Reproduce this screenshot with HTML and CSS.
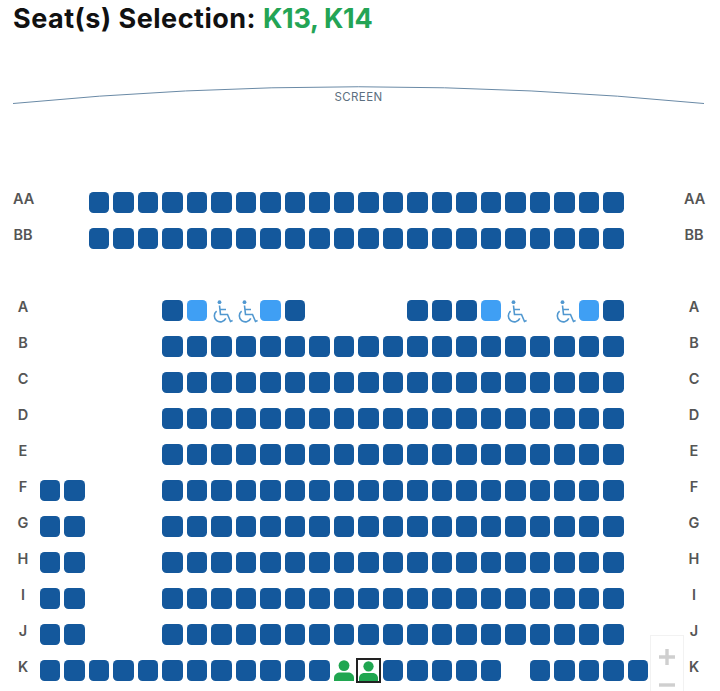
FILE: index.html
```html
<!DOCTYPE html>
<html lang="en">
<head>
<meta charset="utf-8">
<title>Seat Selection</title>
<link rel="stylesheet" href="styles.css">
</head>
<body>
<svg width="0" height="0" class="defs">
  <symbol id="wheel" viewBox="0 0 22 24">
    <circle cx="8.5" cy="3.2" r="1.9" fill="currentColor" stroke="none"/>
    <path d="M8.5 6.5 9.5 15.5H16.5L19.5 22.5 21.6 21.6M9 10.5H15" fill="none" stroke="currentColor" stroke-width="1.6"/>
    <path d="M5.6 12.2A6 6 0 1 0 14.8 19.4" fill="none" stroke="currentColor" stroke-width="1.6"/>
  </symbol>
  <symbol id="person" viewBox="0 0 20 21">
    <circle cx="10" cy="5.6" r="5.4" fill="currentColor"/>
    <path d="M0 21V18.2C0 14.4 3 12.6 6 12.6H14C17 12.6 20 14.4 20 18.2V21Z" fill="currentColor"/>
  </symbol>
</svg>
<main class="page">
  <h1 class="title">Seat(s) Selection: <span class="chosen">K13, K14</span></h1>
  <div class="screen">
    <svg class="screen-arc" viewBox="0 0 691 18" width="691" height="18"><path d="M0 17.5Q345 -16 691 17.5" fill="none" stroke="#6a8aa6" stroke-width="1"/></svg>
    <span class="screen-label">SCREEN</span>
  </div>
  <section class="plan">
    <div class="row"><b class="label">AA</b><i class="gap s2"></i><i class="seat"></i><i class="seat"></i><i class="seat"></i><i class="seat"></i><i class="seat"></i><i class="seat"></i><i class="seat"></i><i class="seat"></i><i class="seat"></i><i class="seat"></i><i class="seat"></i><i class="seat"></i><i class="seat"></i><i class="seat"></i><i class="seat"></i><i class="seat"></i><i class="seat"></i><i class="seat"></i><i class="seat"></i><i class="seat"></i><i class="seat"></i><i class="seat"></i><b class="label end">AA</b></div>
    <div class="row"><b class="label">BB</b><i class="gap s2"></i><i class="seat"></i><i class="seat"></i><i class="seat"></i><i class="seat"></i><i class="seat"></i><i class="seat"></i><i class="seat"></i><i class="seat"></i><i class="seat"></i><i class="seat"></i><i class="seat"></i><i class="seat"></i><i class="seat"></i><i class="seat"></i><i class="seat"></i><i class="seat"></i><i class="seat"></i><i class="seat"></i><i class="seat"></i><i class="seat"></i><i class="seat"></i><i class="seat"></i><b class="label end">BB</b></div>
    <div class="row"></div>
    <div class="row"><b class="label">A</b><i class="gap s5"></i><i class="seat"></i><i class="seat light"></i><svg class="wheel"><use href="#wheel"/></svg><svg class="wheel"><use href="#wheel"/></svg><i class="seat light"></i><i class="seat"></i><i class="gap s4"></i><i class="seat"></i><i class="seat"></i><i class="seat"></i><i class="seat light"></i><svg class="wheel"><use href="#wheel"/></svg><i class="gap s1"></i><svg class="wheel"><use href="#wheel"/></svg><i class="seat light"></i><i class="seat"></i><b class="label end">A</b></div>
    <div class="row"><b class="label">B</b><i class="gap s5"></i><i class="seat"></i><i class="seat"></i><i class="seat"></i><i class="seat"></i><i class="seat"></i><i class="seat"></i><i class="seat"></i><i class="seat"></i><i class="seat"></i><i class="seat"></i><i class="seat"></i><i class="seat"></i><i class="seat"></i><i class="seat"></i><i class="seat"></i><i class="seat"></i><i class="seat"></i><i class="seat"></i><i class="seat"></i><b class="label end">B</b></div>
    <div class="row"><b class="label">C</b><i class="gap s5"></i><i class="seat"></i><i class="seat"></i><i class="seat"></i><i class="seat"></i><i class="seat"></i><i class="seat"></i><i class="seat"></i><i class="seat"></i><i class="seat"></i><i class="seat"></i><i class="seat"></i><i class="seat"></i><i class="seat"></i><i class="seat"></i><i class="seat"></i><i class="seat"></i><i class="seat"></i><i class="seat"></i><i class="seat"></i><b class="label end">C</b></div>
    <div class="row"><b class="label">D</b><i class="gap s5"></i><i class="seat"></i><i class="seat"></i><i class="seat"></i><i class="seat"></i><i class="seat"></i><i class="seat"></i><i class="seat"></i><i class="seat"></i><i class="seat"></i><i class="seat"></i><i class="seat"></i><i class="seat"></i><i class="seat"></i><i class="seat"></i><i class="seat"></i><i class="seat"></i><i class="seat"></i><i class="seat"></i><i class="seat"></i><b class="label end">D</b></div>
    <div class="row"><b class="label">E</b><i class="gap s5"></i><i class="seat"></i><i class="seat"></i><i class="seat"></i><i class="seat"></i><i class="seat"></i><i class="seat"></i><i class="seat"></i><i class="seat"></i><i class="seat"></i><i class="seat"></i><i class="seat"></i><i class="seat"></i><i class="seat"></i><i class="seat"></i><i class="seat"></i><i class="seat"></i><i class="seat"></i><i class="seat"></i><i class="seat"></i><b class="label end">E</b></div>
    <div class="row"><b class="label">F</b><i class="seat"></i><i class="seat"></i><i class="gap s3"></i><i class="seat"></i><i class="seat"></i><i class="seat"></i><i class="seat"></i><i class="seat"></i><i class="seat"></i><i class="seat"></i><i class="seat"></i><i class="seat"></i><i class="seat"></i><i class="seat"></i><i class="seat"></i><i class="seat"></i><i class="seat"></i><i class="seat"></i><i class="seat"></i><i class="seat"></i><i class="seat"></i><i class="seat"></i><b class="label end">F</b></div>
    <div class="row"><b class="label">G</b><i class="seat"></i><i class="seat"></i><i class="gap s3"></i><i class="seat"></i><i class="seat"></i><i class="seat"></i><i class="seat"></i><i class="seat"></i><i class="seat"></i><i class="seat"></i><i class="seat"></i><i class="seat"></i><i class="seat"></i><i class="seat"></i><i class="seat"></i><i class="seat"></i><i class="seat"></i><i class="seat"></i><i class="seat"></i><i class="seat"></i><i class="seat"></i><i class="seat"></i><b class="label end">G</b></div>
    <div class="row"><b class="label">H</b><i class="seat"></i><i class="seat"></i><i class="gap s3"></i><i class="seat"></i><i class="seat"></i><i class="seat"></i><i class="seat"></i><i class="seat"></i><i class="seat"></i><i class="seat"></i><i class="seat"></i><i class="seat"></i><i class="seat"></i><i class="seat"></i><i class="seat"></i><i class="seat"></i><i class="seat"></i><i class="seat"></i><i class="seat"></i><i class="seat"></i><i class="seat"></i><i class="seat"></i><b class="label end">H</b></div>
    <div class="row"><b class="label">I</b><i class="seat"></i><i class="seat"></i><i class="gap s3"></i><i class="seat"></i><i class="seat"></i><i class="seat"></i><i class="seat"></i><i class="seat"></i><i class="seat"></i><i class="seat"></i><i class="seat"></i><i class="seat"></i><i class="seat"></i><i class="seat"></i><i class="seat"></i><i class="seat"></i><i class="seat"></i><i class="seat"></i><i class="seat"></i><i class="seat"></i><i class="seat"></i><i class="seat"></i><b class="label end">I</b></div>
    <div class="row"><b class="label">J</b><i class="seat"></i><i class="seat"></i><i class="gap s3"></i><i class="seat"></i><i class="seat"></i><i class="seat"></i><i class="seat"></i><i class="seat"></i><i class="seat"></i><i class="seat"></i><i class="seat"></i><i class="seat"></i><i class="seat"></i><i class="seat"></i><i class="seat"></i><i class="seat"></i><i class="seat"></i><i class="seat"></i><i class="seat"></i><i class="seat"></i><i class="seat"></i><i class="seat"></i><b class="label end">J</b></div>
    <div class="row"><b class="label">K</b><i class="seat"></i><i class="seat"></i><i class="seat"></i><i class="seat"></i><i class="seat"></i><i class="seat"></i><i class="seat"></i><i class="seat"></i><i class="seat"></i><i class="seat"></i><i class="seat"></i><i class="seat"></i><svg class="person"><use href="#person"/></svg><span class="picked"><svg class="person"><use href="#person"/></svg></span><i class="seat"></i><i class="seat"></i><i class="seat"></i><i class="seat"></i><i class="seat"></i><i class="gap s1"></i><i class="seat"></i><i class="seat"></i><i class="seat"></i><i class="seat"></i><i class="seat"></i><b class="label end">K</b></div>
  </section>
  <div class="zoom">
    <svg class="zoom-plus" viewBox="0 0 16 16" width="16" height="16"><path d="M8 0V16M0 8H16" fill="none" stroke="#cfcfcf" stroke-width="3.4"/></svg>
    <svg class="zoom-minus" viewBox="0 0 16 4" width="16" height="4"><path d="M0 2H16" fill="none" stroke="#cfcfcf" stroke-width="3.4"/></svg>
  </div>
</main>
</body>
</html>
```
FILE: styles.css
```css
html, body {
  margin: 0;
  height: 691px;
  overflow: hidden;
  background: #fff;
  font-family: Inter, "Liberation Sans", sans-serif;
}
.defs { position: absolute; }
.page { position: relative; height: 691px; overflow: hidden; }
.title {
  margin: 0;
  padding: 3px 0 0 13px;
  height: 37px;
  font-size: 27px;
  line-height: 32px;
  font-weight: 700;
  letter-spacing: 0.5px;
  color: #111;
}
.chosen { color: #23a455; letter-spacing: -0.3px; }
.screen {
  position: relative;
  margin: 46px 0 0 13px;
  height: 27px;
  width: 691px;
}
.screen-arc { display: block; }
.screen-label {
  position: absolute;
  left: 0;
  right: 0;
  top: 5px;
  text-align: center;
  font-size: 11.5px;
  line-height: 13px;
  color: #5c6f80;
  letter-spacing: 0.4px;
}
.plan { margin-top: 79px; padding-left: 13px; }
.row {
  display: grid;
  grid-template-columns: 20px 6.5px repeat(25, 24.5px) 32px 20px;
  grid-template-rows: 21px;
  height: 21px;
  margin-bottom: 15px;
  align-items: center;
}
.label {
  grid-column: 1;
  font-size: 14.5px;
  font-weight: 600;
  color: #555;
  text-align: center;
  line-height: 16px;
  margin-top: -7px;
}
.label + * { grid-column-start: 3; }
.label.end { grid-column: 29; }
.seat {
  display: block;
  width: 20.5px;
  height: 21px;
  border-radius: 4.5px;
  background: #14589c;
}
.seat.light { background: #3f9ff4; }
.gap { display: block; height: 21px; }
.s1 { grid-column-end: span 1; }
.s2 { grid-column-end: span 2; }
.s3 { grid-column-end: span 3; }
.s4 { grid-column-end: span 4; }
.s5 { grid-column-end: span 5; }
.wheel {
  display: block;
  width: 22px;
  height: 24px;
  margin-top: 1px;
  color: #5198d0;
}
.person {
  display: block;
  width: 20px;
  height: 21px;
  color: #20a650;
}
.picked {
  display: flex;
  align-items: center;
  justify-content: center;
  box-sizing: border-box;
  width: 25px;
  height: 25px;
  margin-left: -2.5px;
  border: 2px solid #222;
}
.picked .person { width: 19px; height: 20px; }
.zoom {
  position: absolute;
  left: 650px;
  top: 635px;
  width: 34px;
  height: 56px;
  box-sizing: border-box;
  padding-top: 13px;
  border: 1px solid #f2f2f2;
  border-bottom: 0;
  background: #fff;
  display: flex;
  flex-direction: column;
  align-items: center;
  gap: 18px;
}
.zoom-plus, .zoom-minus { display: block; flex: none; }
```
